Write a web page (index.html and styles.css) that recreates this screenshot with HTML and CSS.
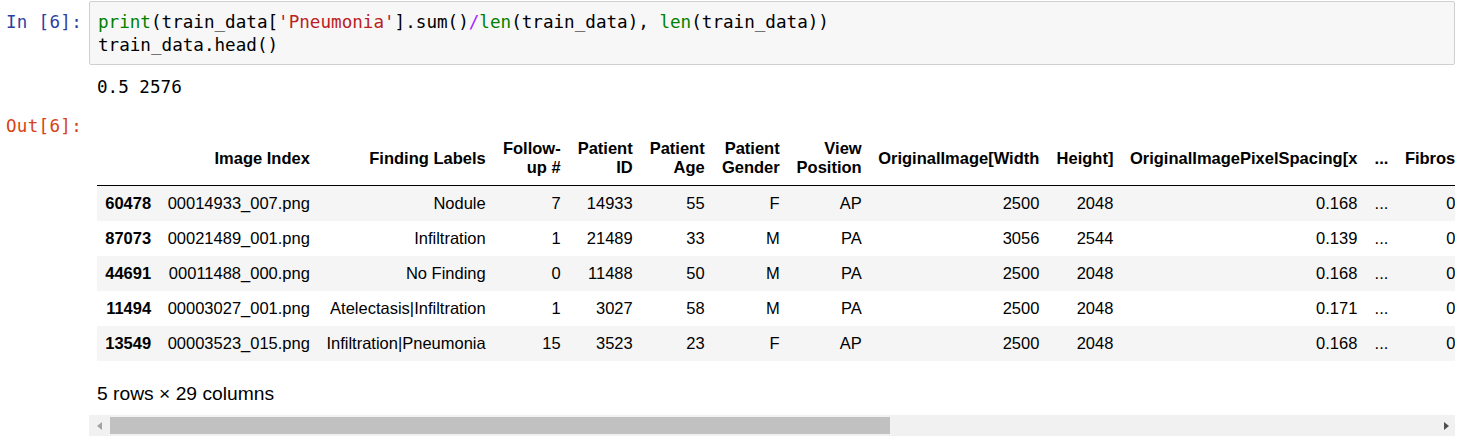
FILE: index.html
```html
<!DOCTYPE html>
<html>
<head>
<meta charset="utf-8">
<link rel="stylesheet" href="styles.css">
</head>
<body>
<div class="nb">
  <div class="row">
    <div class="prompt prompt-in">In&nbsp;[6]:</div>
    <div class="input"><pre class="code"><span class="bi">print</span>(train_data[<span class="str">'Pneumonia'</span>].sum()<span class="op">/</span><span class="bi">len</span>(train_data), <span class="bi">len</span>(train_data))
train_data.head()</pre></div>
  </div>
  <div class="row row-stream">
    <div class="prompt"></div>
    <pre class="stream">0.5 2576</pre>
  </div>
  <div class="row row-result">
    <div class="prompt prompt-out">Out[6]:</div>
    <div class="subarea">
      <div class="df">
        <table class="frame">
          <thead>
            <tr>
              <th class="c-idx"></th>
              <th class="c-img">Image Index</th>
              <th class="c-find">Finding Labels</th>
              <th class="c-fu">Follow-up #</th>
              <th class="c-pid">Patient ID</th>
              <th class="c-age">Patient Age</th>
              <th class="c-gen">Patient Gender</th>
              <th class="c-view">View Position</th>
              <th class="c-w">OriginalImage[Width</th>
              <th class="c-h">Height]</th>
              <th class="c-px">OriginalImagePixelSpacing[x</th>
              <th class="c-dots">...</th>
              <th>Fibrosis</th>
              <th>Hernia</th>
              <th>Infiltration</th>
              <th>Mass</th>
              <th>No Finding</th>
              <th>Nodule</th>
              <th>Pleural_Thickening</th>
              <th>Pneumonia</th>
              <th>Pneumothorax</th>
              <th>Pneumonia_Class</th>
            </tr>
          </thead>
          <tbody>
            <tr>
              <th>60478</th><td>00014933_007.png</td><td>Nodule</td><td>7</td><td>14933</td><td>55</td><td>F</td><td>AP</td><td>2500</td><td>2048</td><td>0.168</td><td>...</td><td>0.0</td><td>0.0</td><td>0.0</td><td>0.0</td><td>0.0</td><td>1.0</td><td>0.0</td><td>0.0</td><td>0.0</td><td>0</td>
            </tr>
            <tr>
              <th>87073</th><td>00021489_001.png</td><td>Infiltration</td><td>1</td><td>21489</td><td>33</td><td>M</td><td>PA</td><td>3056</td><td>2544</td><td>0.139</td><td>...</td><td>0.0</td><td>0.0</td><td>1.0</td><td>0.0</td><td>0.0</td><td>0.0</td><td>0.0</td><td>0.0</td><td>0.0</td><td>0</td>
            </tr>
            <tr>
              <th>44691</th><td>00011488_000.png</td><td>No Finding</td><td>0</td><td>11488</td><td>50</td><td>M</td><td>PA</td><td>2500</td><td>2048</td><td>0.168</td><td>...</td><td>0.0</td><td>0.0</td><td>0.0</td><td>0.0</td><td>1.0</td><td>0.0</td><td>0.0</td><td>0.0</td><td>0.0</td><td>0</td>
            </tr>
            <tr>
              <th>11494</th><td>00003027_001.png</td><td>Atelectasis|Infiltration</td><td>1</td><td>3027</td><td>58</td><td>M</td><td>PA</td><td>2500</td><td>2048</td><td>0.171</td><td>...</td><td>0.0</td><td>0.0</td><td>1.0</td><td>0.0</td><td>0.0</td><td>0.0</td><td>0.0</td><td>0.0</td><td>0.0</td><td>0</td>
            </tr>
            <tr>
              <th>13549</th><td>00003523_015.png</td><td>Infiltration|Pneumonia</td><td>15</td><td>3523</td><td>23</td><td>F</td><td>AP</td><td>2500</td><td>2048</td><td>0.168</td><td>...</td><td>0.0</td><td>0.0</td><td>1.0</td><td>0.0</td><td>0.0</td><td>0.0</td><td>0.0</td><td>1.0</td><td>0.0</td><td>1</td>
            </tr>
          </tbody>
        </table>
        <p class="summary">5 rows × 29 columns</p>
      </div>
      <div class="hscroll">
        <div class="sb-btn"><span class="arrow-left"></span></div>
        <div class="sb-track"><div class="sb-thumb"></div></div>
        <div class="sb-btn sb-btn-right"><span class="arrow-right"></span></div>
      </div>
    </div>
  </div>
</div>
</body>
</html>
```
FILE: styles.css
```css
html, body {
  margin: 0;
  padding: 0;
  background: #ffffff;
}

.nb {
  padding: 1px 2px 0 0;
}

.row {
  display: flex;
  align-items: flex-start;
}

.prompt {
  flex: 0 0 89px;
  box-sizing: border-box;
  padding-right: 7px;
  text-align: right;
  font-family: "DejaVu Sans Mono", monospace;
  font-size: 17.55px;
  line-height: 23px;
  white-space: nowrap;
  letter-spacing: 0.3px;
}

.prompt-in {
  color: #303f9f;
  padding-top: 10px;
}

.prompt-out {
  color: #d84315;
}

.input {
  flex: 1;
  min-width: 0;
  background: #f7f7f7;
  border: 1px solid #cfcfcf;
  border-radius: 2px;
  padding: 9px 8px 7px;
}

.code,
.stream {
  margin: 0;
  font-family: "DejaVu Sans Mono", monospace;
  font-size: 17.6px;
  line-height: 23px;
  color: #000;
}

.bi { color: #008000; }
.str { color: #ba2121; }
.op { color: #aa22ff; }

.row-stream {
  margin-top: 11px;
}

.stream {
  padding-left: 8px;
}

.row-result {
  margin-top: 16px;
}

.subarea {
  flex: 1;
  min-width: 0;
}

.df {
  overflow: hidden;
  padding: 16px 0 0 8px;
}

.frame {
  border-collapse: collapse;
  border-spacing: 0;
  border: none;
  font-family: "Liberation Sans", Arial, sans-serif;
  font-size: 16.5px;
  color: #000;
}

.frame th,
.frame td {
  padding: 8.25px;
  text-align: right;
  vertical-align: middle;
  line-height: 18.5px;
  white-space: normal;
  border: none;
}

.frame th {
  font-weight: bold;
}

.frame thead {
  border-bottom: 1px solid #000;
}

.frame tbody tr:nth-child(odd) {
  background: #f5f5f5;
}

/* column widths (content box) matching the rendered reference */
.c-fu   { width: 58.5px; min-width: 58.5px; }
.c-pid  { width: 55.5px; min-width: 55.5px; }
.c-age  { width: 55.5px; min-width: 55.5px; }
.c-gen  { width: 58.5px; min-width: 58.5px; }
.c-view { width: 65.5px; min-width: 65.5px; }
.c-w    { width: 160.5px; min-width: 160.5px; }
.c-h    { width: 57.5px; min-width: 57.5px; }
.c-px   { width: 227.5px; min-width: 227.5px; }
.c-dots { width: 14.5px; min-width: 14.5px; }

.summary {
  margin: 19px 0 0;
  font-family: "Liberation Sans", Arial, sans-serif;
  font-size: 19.25px;
  line-height: 27.5px;
  color: #000;
  white-space: nowrap;
}

.hscroll {
  margin-top: 8px;
  height: 21px;
  display: flex;
  background: #f1f1f1;
}

.sb-btn {
  flex: 0 0 21px;
  display: flex;
  align-items: center;
  justify-content: center;
}

.sb-btn-right {
  padding-left: 4px;
  box-sizing: border-box;
}

.arrow-left {
  width: 0;
  height: 0;
  border-top: 4px solid transparent;
  border-bottom: 4px solid transparent;
  border-right: 5px solid #a3a3a3;
}

.arrow-right {
  width: 0;
  height: 0;
  border-top: 4px solid transparent;
  border-bottom: 4px solid transparent;
  border-left: 5px solid #505050;
}

.sb-track {
  flex: 1;
  display: flex;
  align-items: center;
}

.sb-thumb {
  width: 780px;
  height: 17px;
  background: #c1c1c1;
}
```
